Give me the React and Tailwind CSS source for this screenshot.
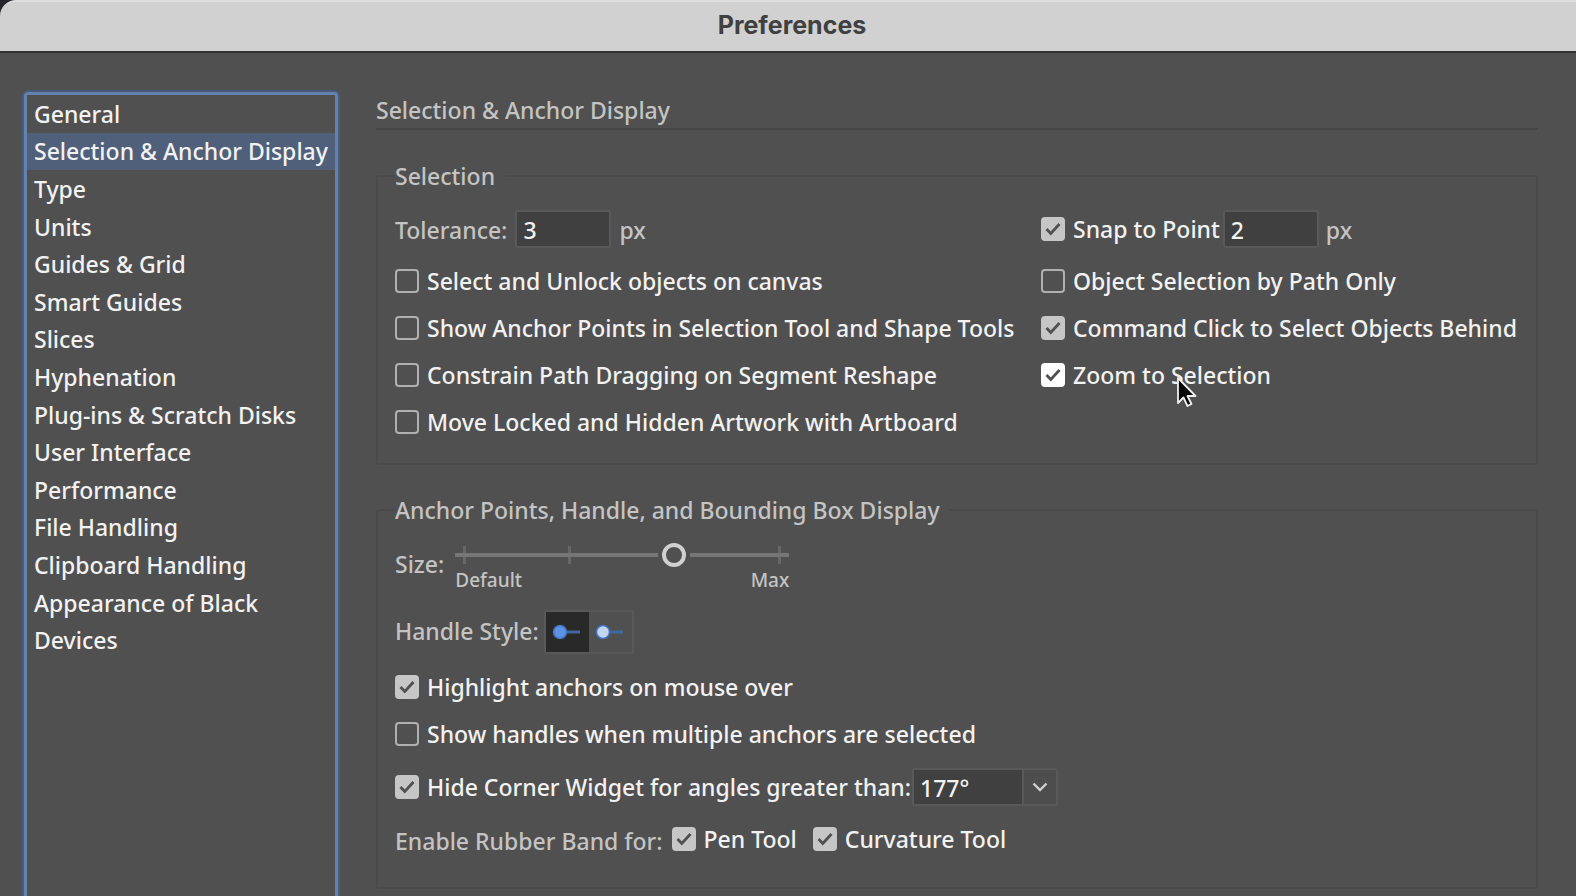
import { useState } from "react";

const SECTIONS = [
  "General",
  "Selection & Anchor Display",
  "Type",
  "Units",
  "Guides & Grid",
  "Smart Guides",
  "Slices",
  "Hyphenation",
  "Plug-ins & Scratch Disks",
  "User Interface",
  "Performance",
  "File Handling",
  "Clipboard Handling",
  "Appearance of Black",
  "Devices",
];

/* ─── Controls ────────────────────────────────────────────────────── */
function Check({ label, checked = false, active = false }) {
  const [on, setOn] = useState(checked);
  return (
    <label className="flex h-7 items-center gap-2 whitespace-nowrap text-[#f2f2f2]">
      <span className="grid size-6 shrink-0 place-items-center">
        <input
          type="checkbox" checked={on} onChange={e => setOn(e.target.checked)}
          className={`col-start-1 row-start-1 size-6 appearance-none rounded-[4px] border-2 border-[#b0b0b0] ${active ? "checked:border-white checked:bg-white" : "checked:border-[#c6c6c6] checked:bg-[#c6c6c6]"}`}
        />
        {on && (
          <svg viewBox="0 0 24 24" className="pointer-events-none col-start-1 row-start-1 size-6" fill="none" stroke="#505050" strokeWidth="2.8">
            <path d="M5.500 12l4.300 4.500L18.500 7" />
          </svg>
        )}
      </span>
      <span>{label}</span>
    </label>
  );
}

function NumberField({ id, value, label }) {
  return (
    <input
      id={id} type="text" defaultValue={value} aria-label={label}
      className="h-[38px] w-[96px] rounded-[3px] border-2 border-[#595959] bg-[#404040] px-1.5 pt-0.5 text-[#f2f2f2] outline-none"
    />
  );
}

function HandleButton({ selected, label, onClick, fill }) {
  return (
    <button
      type="button" aria-pressed={selected} aria-label={label} onClick={onClick}
      className={`grid h-10 w-[43px] place-items-center ${selected ? "bg-[#292929]" : "bg-[#505050]"}`}
    >
      <svg viewBox="0 0 44 40" className="h-10 w-11">
        <path d="M18 20h16" stroke="#41699f" strokeWidth="3" />
        <circle cx="14" cy="20" r="6.500" fill={fill} stroke="#4373bd" strokeWidth="1.500" />
      </svg>
    </button>
  );
}

function Group({ title, className, children }) {
  return (
    <fieldset className={`min-w-0 rounded-[3px] border-2 border-[#4a4a4a] px-[17px] ${className}`}>
      <legend className="h-7 pr-2.5 leading-7">{title}</legend>
      {children}
    </fieldset>
  );
}

/* ─── Sidebar ─────────────────────────────────────────────────────── */
function Sidebar({ current, onSelect }) {
  return (
    <nav className="w-[314px] shrink-0 rounded-t-[4px] border-[3px] border-b-0 border-[#6482ae] shadow-[0_0_0_2px_#485b78]">
      <ul className="flex h-[564px] flex-col">
        {SECTIONS.map(name => (
          <li key={name} className="flex flex-1">
            <button
              type="button" onClick={() => onSelect(name)}
              className={`flex w-full items-center whitespace-nowrap pl-[7px] text-left text-[#f2f2f2] ${name === current ? "bg-[#50607b]" : ""}`}
            >
              {name}
            </button>
          </li>
        ))}
      </ul>
    </nav>
  );
}

export default function App() {
  const [section, setSection] = useState("Selection & Anchor Display");
  const [size, setSize] = useState(2);
  const [handle, setHandle] = useState("solid");

  return (
    <div className="flex min-h-screen flex-col bg-[#505050] font-['Noto_Sans',sans-serif] text-[23px] leading-7 font-medium text-[#c4c4c4]">
      <div className="bg-[#25252b]">
        <header className="flex h-[53px] items-center justify-center rounded-tl-[16px] border-t-2 border-b-2 border-t-[#dedede] border-b-[#303030] bg-[#d1d1d1] pb-1 pl-2">
          <h1 className="font-['Inter',sans-serif] text-[25px] font-bold text-[#404040]">Preferences</h1>
        </header>
      </div>

      <div className="flex flex-1 gap-[38px] pt-[39px] pr-[38px] pl-6">
        <Sidebar current={section} onSelect={setSection} />

        <main className="flex min-w-0 flex-1 flex-col">
          <h2 className="mt-1 border-b-2 border-[#454545] pb-1">{section}</h2>

          <Group title="Selection" className="mt-8 h-[303px]">
            <div className="grid grid-cols-[646px_1fr] items-start">
              <div className="flex flex-col gap-[19px] pt-5">
                <div className="flex items-center gap-2">
                  <label htmlFor="tolerance" className="pt-0.5">Tolerance:</label>
                  <NumberField id="tolerance" value="3" />
                  <span className="pt-0.5">px</span>
                </div>
                <Check label="Select and Unlock objects on canvas" />
                <Check label="Show Anchor Points in Selection Tool and Shape Tools" />
                <Check label="Constrain Path Dragging on Segment Reshape" />
                <Check label="Move Locked and Hidden Artwork with Artboard" />
              </div>
              <div className="flex flex-col gap-[19px] pt-5">
                <div className="flex items-center gap-[3px]">
                  <Check label="Snap to Point" checked />
                  <NumberField id="snap" value="2" label="Snap to Point distance" />
                  <span className="pt-0.5 pl-1">px</span>
                </div>
                <Check label="Object Selection by Path Only" />
                <Check label="Command Click to Select Objects Behind" checked />
                <div className="relative">
                  <Check label="Zoom to Selection" checked active />
                  <svg viewBox="0 0 22 34" className="pointer-events-none absolute top-[14px] left-[135px] h-[34px] w-[22px]">
                    <path d="M2 3v25l5.500-5.500 4 8.500 4-2-4-8h8z" fill="#080808" stroke="#f0f0f0" strokeWidth="1.800" strokeLinejoin="round" />
                  </svg>
                </div>
              </div>
            </div>
          </Group>

          <Group title="Anchor Points, Handle, and Bounding Box Display" className="mt-[31px] h-[393px]">
            <div className="flex items-center gap-[11px] pt-4">
              <label htmlFor="size" className="pb-0.5">Size:</label>
              <div className="relative w-[334px]">
                <div className="absolute top-[6px] right-0 left-0 flex justify-between px-2">
                  <span className="h-[18px] w-[3px] bg-[#676767]" />
                  <span className="h-[18px] w-[3px] bg-[#676767]" />
                  <span className="h-[18px] w-[3px]" />
                  <span className="h-[18px] w-[3px] bg-[#676767]" />
                </div>
                <input
                  id="size" type="range" min="0" max="3" value={size} onChange={e => setSize(Number(e.target.value))}
                  className="relative block h-[30px] w-full appearance-none bg-transparent [&::-webkit-slider-runnable-track]:h-1 [&::-webkit-slider-runnable-track]:bg-[#767676] [&::-webkit-slider-thumb]:-mt-[10px] [&::-webkit-slider-thumb]:size-6 [&::-webkit-slider-thumb]:appearance-none [&::-webkit-slider-thumb]:rounded-full [&::-webkit-slider-thumb]:border-4 [&::-webkit-slider-thumb]:border-[#d0d0d0] [&::-webkit-slider-thumb]:bg-[#505050] [&::-webkit-slider-thumb]:shadow-[0_0_0_4px_#505050]"
                />
                <div className="flex justify-between text-[19px] leading-5">
                  <span>Default</span>
                  <span>Max</span>
                </div>
              </div>
            </div>

            <div className="mt-5 flex items-center gap-[5px]">
              <span className="pb-0.5">Handle Style:</span>
              <div className="flex rounded-[3px] border-2 border-[#595959]">
                <HandleButton label="Solid handles" selected={handle === "solid"} onClick={() => setHandle("solid")} fill="#5f92e6" />
                <HandleButton label="Hollow handles" selected={handle === "hollow"} onClick={() => setHandle("hollow")} fill="#c5d4f0" />
              </div>
            </div>

            <div className="mt-[19px] flex flex-col gap-[19px]">
              <Check label="Highlight anchors on mouse over" checked />
              <Check label="Show handles when multiple anchors are selected" />
            </div>

            <div className="mt-5 flex items-center gap-px">
              <Check label="Hide Corner Widget for angles greater than:" checked />
              <div className="relative">
                <select
                  aria-label="Corner widget angle" defaultValue="177"
                  className="block h-[38px] w-[146px] appearance-none rounded-[3px] border-2 border-[#595959] bg-[#404040] pt-0.5 pl-1.5 text-[#f2f2f2] outline-none"
                >
                  <option value="177">177°</option>
                </select>
                <span className="pointer-events-none absolute top-0.5 right-0.5 bottom-0.5 grid w-[34px] place-items-center border-l-2 border-[#595959] bg-[#4d4d4d]">
                  <svg viewBox="0 0 16 10" className="h-[10px] w-4" fill="none" stroke="#d0d0d0" strokeWidth="2.400">
                    <path d="M1.500 1.500L8 8l6.500-6.500" />
                  </svg>
                </span>
              </div>
            </div>

            <div className="mt-[17px] flex items-center gap-[9px]">
              <span className="pt-1">Enable Rubber Band for:</span>
              <div className="flex gap-4">
                <Check label="Pen Tool" checked />
                <Check label="Curvature Tool" checked />
              </div>
            </div>
          </Group>
        </main>
      </div>
    </div>
  );
}
